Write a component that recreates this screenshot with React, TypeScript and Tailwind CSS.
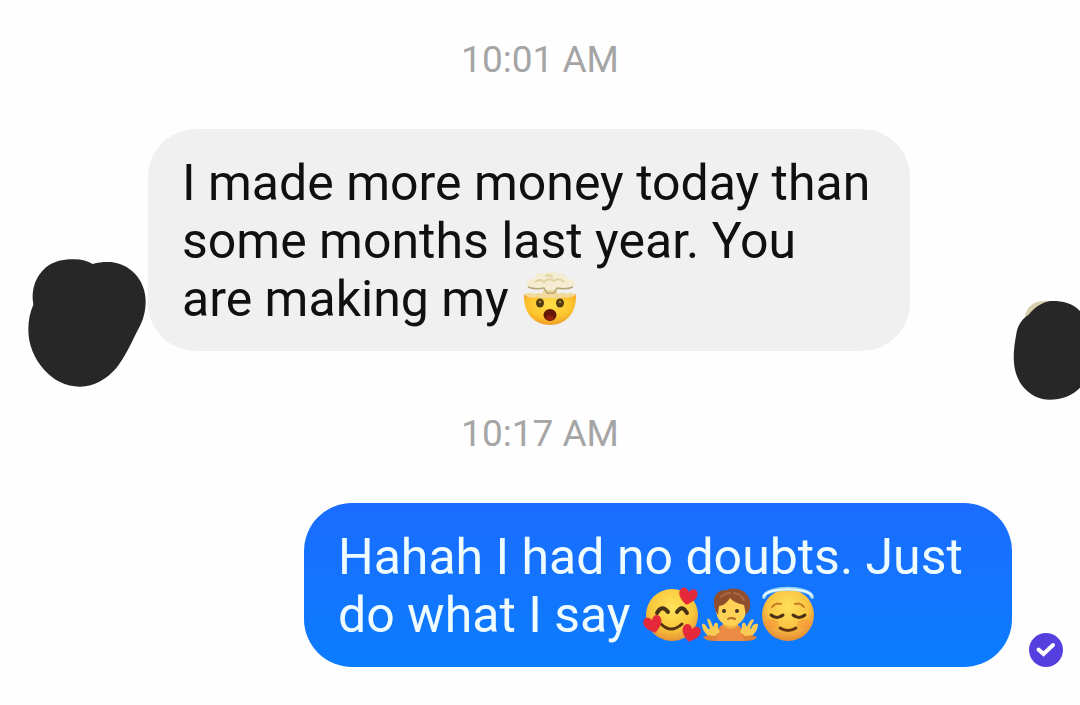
import type { ReactNode } from "react";

function ExplodingHead() {
  return (
    <svg role="img" aria-label="exploding head" viewBox="0 0 58 58" className="inline-block size-[58px] align-top">
      <defs>
        <radialGradient id="boomFace" cx="50%" cy="35%" r="65%">
          <stop offset="0" stopColor="#ffe04a" />
          <stop offset="0.65" stopColor="#fcc42c" />
          <stop offset="1" stopColor="#ee9a27" />
        </radialGradient>
      </defs>
      <path d="M3 24C2 44 14 55 29 55S56 44 55 24Q29 31 3 24Z" fill="url(#boomFace)" />
      <path d="M3 25Q8 21 12 24Q17 22 21 24L23 18H35L37 24Q42 21 46 24Q50 21 55 25Q48 29 42 27Q36 30 29 27Q22 30 16 27Q9 29 3 25Z" fill="#f0d99a" />
      <path d="M8 18C2 14 7 8 13 9C14 3 21 2 24 4C28 -1 36 1 37 4C43 2 47 6 46 9C53 8 57 14 51 18C46 21 39 19 35 20H23C18 19 12 21 8 18Z" fill="#f5edd2" />
      <path d="M7 17Q15 20 23 18L26 23H33L36 18Q44 20 52 17" fill="none" stroke="#b5a77f" strokeWidth="1.5" />
      <path d="M14 12Q19 8 23 12Q28 7 33 11Q38 7 43 12M24 6Q29 4 32 7" fill="none" stroke="#e2d3a2" strokeWidth="2" />
      <ellipse cx="19" cy="33" rx="4" ry="4.500" fill="#4f3a12" />
      <ellipse cx="39" cy="33" rx="4" ry="4.500" fill="#4f3a12" />
      <circle cx="19" cy="32" r="1.300" fill="#a98532" />
      <circle cx="39" cy="32" r="1.300" fill="#a98532" />
      <ellipse cx="29" cy="45" rx="6.500" ry="6" fill="#631507" />
      <ellipse cx="29" cy="48" rx="4" ry="2.500" fill="#8e2010" />
    </svg>
  );
}

function Heart({ x, y, turn }: { x: number; y: number; turn: number }) {
  return (
    <path
      transform={`translate(${x} ${y}) rotate(${turn})`}
      d="M0 9C-6 5 -10 1 -9 -4C-8 -9 -2 -9 0 -4C2 -9 8 -9 9 -4C10 1 6 5 0 9Z"
      fill="#e3293a"
    />
  );
}

function SmilingHearts() {
  return (
    <svg role="img" aria-label="smiling face with hearts" viewBox="0 0 58 58" className="inline-block size-[58px] align-top">
      <defs>
        <radialGradient id="loveFace" cx="50%" cy="35%" r="65%">
          <stop offset="0" stopColor="#ffe35c" />
          <stop offset="0.65" stopColor="#f9c73a" />
          <stop offset="1" stopColor="#e79335" />
        </radialGradient>
      </defs>
      <circle cx="29" cy="29" r="26" fill="url(#loveFace)" />
      <path d="M14 27Q19 18 25 26M34 26Q39 18 44 27" fill="none" stroke="#493316" strokeWidth="4" strokeLinecap="round" />
      <path d="M18 38Q28 48 39 38" fill="none" stroke="#553113" strokeWidth="3" strokeLinecap="round" />
      <Heart x={45} y={10} turn={10} />
      <Heart x={10} y={38} turn={-15} />
      <Heart x={48} y={47} turn={15} />
    </svg>
  );
}

function Shrug() {
  return (
    <svg role="img" aria-label="person shrugging" viewBox="0 0 58 58" className="inline-block size-[58px] align-top">
      <path d="M14 55C15 42 20 37 29 37S43 42 44 55Z" fill="#ed8b46" />
      <path d="M2 51Q4 55 14 55L21 41L13 47ZM56 51Q54 55 44 55L37 41L45 47Z" fill="#e08238" />
      <path d="M14 50L6 49Q1 44 1 38Q4 37 7 43L9 43L6 33Q9 31 12 41L14 37Q18 36 17 42L19 46Z" fill="#f9cb54" />
      <path d="M44 50L52 49Q57 44 57 38Q52 37 50 43L49 42L53 34Q50 31 46 41L44 37Q40 36 41 42L39 46Z" fill="#f9cb54" />
      <path d="M22 34H37V40Q30 46 22 40Z" fill="#f1b13c" />
      <ellipse cx="30" cy="24" rx="15" ry="16" fill="#ffd154" />
      <path d="M15 26C9 10 17 3 26 4C37 -1 54 8 48 25L45 29L43 19Q33 17 29 12Q25 19 18 20L17 29Z" fill="#8f4e2d" />
      <path d="M20 11Q24 7 29 7M33 7Q40 8 43 14" fill="none" stroke="#ad6741" strokeWidth="2" strokeLinecap="round" />
      <circle cx="23" cy="25" r="2" fill="#403022" />
      <circle cx="36" cy="25" r="2" fill="#403022" />
      <path d="M27 33Q30 31 34 33" fill="none" stroke="#b56a2a" strokeWidth="2" strokeLinecap="round" />
    </svg>
  );
}

function Halo() {
  return (
    <svg role="img" aria-label="smiling face with halo" viewBox="0 0 58 58" className="inline-block size-[58px] align-top">
      <defs>
        <radialGradient id="haloFace" cx="50%" cy="35%" r="65%">
          <stop offset="0" stopColor="#ffe05b" />
          <stop offset="0.6" stopColor="#fac441" />
          <stop offset="1" stopColor="#e48a36" />
        </radialGradient>
      </defs>
      <circle cx="29" cy="29" r="26" fill="url(#haloFace)" />
      <ellipse cx="13" cy="38" rx="7" ry="5" fill="#f38b35" opacity="0.45" />
      <ellipse cx="45" cy="38" rx="7" ry="5" fill="#f38b35" opacity="0.45" />
      <path d="M5 11C7 0 51 0 53 11" fill="none" stroke="#8fd0ee" strokeWidth="4" strokeLinecap="round" />
      <path d="M5 10C8 1 50 1 53 10" fill="none" stroke="#e4f9ff" strokeWidth="2" strokeLinecap="round" />
      <path d="M13 21Q17 16 22 18M36 18Q41 16 45 21" fill="none" stroke="#c77b24" strokeWidth="2" strokeLinecap="round" />
      <path d="M12 29Q18 34 24 29M34 29Q40 34 46 29" fill="none" stroke="#4b3015" strokeWidth="3" strokeLinecap="round" />
      <path d="M21 42Q29 47 37 42" fill="none" stroke="#633316" strokeWidth="3" strokeLinecap="round" />
    </svg>
  );
}

function Timestamp({ children }: { children: ReactNode }) {
  return <time className="block text-center text-[37px] leading-[44px] text-[#a5a5a5]">{children}</time>;
}

export default function App() {
  return (
    <main className="min-h-screen overflow-hidden bg-[#fefefe] pt-[38px] pb-[38px] font-['Roboto',sans-serif]">
      <Timestamp>10:01 AM</Timestamp>

      {/* Incoming message */}
      <section className="mt-[47px] flex items-start pl-7">
        <svg aria-hidden="true" viewBox="54 57 354 387" className="mt-[130px] h-[129px] w-[118px] shrink-0">
          <path
            d="M188 58C212 57 232 63 248 72C268 66 285 65 302 66C355 70 406 115 407 182C407 222 396 248 380 277C362 313 345 352 319 384C291 416 255 440 210 440C166 440 130 420 103 390C72 356 55 312 55 270C55 240 60 216 70 194C62 147 78 108 108 82C130 65 157 58 188 58Z"
            fill="#272727"
          />
        </svg>
        <div className="ml-0.5 w-full max-w-[762px] rounded-[48px] bg-[#f0f0f0] pt-[25px] pr-7 pb-[23px] pl-[34px] text-[50px] leading-[58px] text-[#101010]">
          <p className="whitespace-nowrap">I made more money today than</p>
          <p className="whitespace-nowrap">some months last year. You</p>
          <p className="flex whitespace-pre">are making my <ExplodingHead /></p>
        </div>
        <svg aria-hidden="true" viewBox="39 44 201 300" className="mt-[171px] ml-auto h-[100px] w-[67px] shrink-0">
          <path d="M75 96C77 62 104 45 145 46L170 55L90 104Z" fill="#d8d0ad" />
          <path
            d="M240 77C215 51 183 46 151 47C124 51 102 68 86 88C61 104 51 126 48 151C42 184 39 214 43 242C51 301 96 342 148 343C185 343 217 331 240 307Z"
            fill="#272727"
          />
        </svg>
      </section>

      <div className="mt-3">
        <Timestamp>10:17 AM</Timestamp>
      </div>

      {/* Outgoing message */}
      <section className="mt-[47px] flex items-end justify-end gap-[17px] pr-[17px]">
        <div className="w-full max-w-[708px] rounded-[48px] bg-linear-to-b from-[#1a6cff] to-[#0a7cff] pt-[25px] pr-7 pb-[23px] pl-[34px] text-[50px] leading-[58px] text-[#eefcff]">
          <p className="whitespace-nowrap">Hahah I had no doubts. Just</p>
          <p className="flex whitespace-pre">do what I say <SmilingHearts /><Shrug /><Halo /></p>
        </div>
        <svg role="img" aria-label="Delivered" viewBox="0 0 34 34" className="size-[34px] shrink-0">
          <circle cx="17" cy="17" r="17" fill="#5540df" />
          <path d="M9.500 16.500L14.500 21L24 12" fill="none" stroke="#fff" strokeWidth="4" strokeLinecap="round" />
        </svg>
      </section>
    </main>
  );
}
